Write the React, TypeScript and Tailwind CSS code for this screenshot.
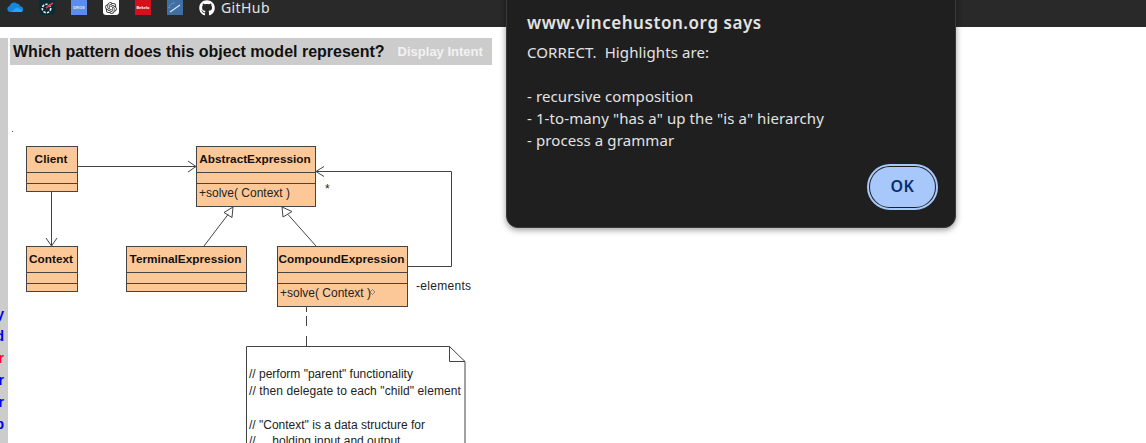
import { FaGithub } from "react-icons/fa";
import { RiOpenaiFill } from "react-icons/ri";

const sideLetters = [
  { ch: "y", red: false },
  { ch: "d", red: false },
  { ch: "r", red: true },
  { ch: "r", red: false },
  { ch: "r", red: false },
  { ch: "p", red: false },
];

function Bookmarks() {
  return (
    <div className="h-[27px] bg-[#292929] flex items-start pl-[7px] gap-4 overflow-hidden shrink-0">
      <svg width="16" height="15" viewBox="0 0 16 15">
        <path d="M3 12a3 3 0 0 1-.4-5.9A4.4 4.4 0 0 1 9.8 3.6a3.4 3.4 0 0 1 3.4 2.6A2.9 2.9 0 0 1 13 12z" fill="#1a86d8" />
        <path d="M4 12 9.8 7.4 16 10.4a2.9 2.9 0 0 1-3 1.6z" fill="#2aa7ee" />
      </svg>
      <div className="w-4 h-[15px] bg-[#0d2b33] rounded-b-sm flex items-center justify-center">
        <svg width="14" height="14" viewBox="0 0 14 14">
          <circle cx="6.5" cy="7.5" r="4.2" fill="none" stroke="#e8eef0" strokeWidth="1.6" strokeDasharray="2.4 1.2" />
          <path d="M6 7 13 2" stroke="#e5344a" strokeWidth="1.7" />
        </svg>
      </div>
      <div className="w-4 h-[15px] bg-[#5b8def] flex items-center justify-center">
        <span className="text-[4px] leading-none font-bold text-[#dfe9fb] font-['Liberation_Sans',sans-serif]">DRGS</span>
      </div>
      <div className="w-4 h-[15px] bg-white rounded-b-[3px] flex items-center justify-center">
        <RiOpenaiFill className="text-[#222] w-[14px] h-[14px]" />
      </div>
      <div className="w-4 h-[15px] bg-[#d5101c] flex items-center justify-center">
        <span className="text-[4px] leading-none font-bold text-white font-['Liberation_Sans',sans-serif]">Bekelo</span>
      </div>
      <div className="w-4 h-[15px] bg-[#3f6fa3] flex items-center justify-center">
        <svg width="14" height="13" viewBox="0 0 14 13">
          <path d="M2 11 12 4" stroke="#dbe7f2" strokeWidth="1.2" />
          <path d="M1 7a6 6 0 0 1 6-5" stroke="#9fc0de" strokeWidth="1" fill="none" strokeDasharray="1 1" />
        </svg>
      </div>
      <div className="flex items-center gap-[6px] h-[15px] text-[#e3e3e3]">
        <FaGithub className="w-4 h-4 text-white" />
        <span className="text-[14px] leading-none tracking-[0.4px] font-['Noto_Sans',sans-serif]">GitHub</span>
      </div>
    </div>
  );
}

function UmlBox({ x, y, w, h, title }: { x: number; y: number; w: number; h: number; title: string }) {
  return (
    <g>
      <rect x={x + 0.5} y={y + 0.5} width={w} height={h} fill="#fdc898" stroke="#444" />
      <path d={`M${x} ${y + 26.5}H${x + w}M${x} ${y + 37.5}H${x + w}`} stroke="#444" />
      <text x={x + w / 2 - 0.5} y={y + 16.5} textAnchor="middle" fontSize="11.8" fontWeight="700" fill="#111">
        {title}
      </text>
    </g>
  );
}

function Diagram() {
  return (
    <svg
      width="482"
      height="378"
      viewBox="10 65 482 378"
      className="block font-['Liberation_Sans',sans-serif]"
    >
      <rect x="12" y="131" width="1" height="1" fill="#555" />

      <UmlBox x={26} y={146} w={51} h={45} title="Client" />
      <UmlBox x={196} y={146} w={119} h={60} title="AbstractExpression" />
      <UmlBox x={26} y={246} w={51} h={45} title="Context" />
      <UmlBox x={126} y={246} w={120} h={45} title="TerminalExpression" />
      <UmlBox x={277} y={246} w={130} h={60} title="CompoundExpression" />

      <g fontSize="12" fill="#222">
        <text x="199" y="196.5">+solve( Context )</text>
        <text x="280" y="296.5">+solve( Context )</text>
        <text x="325" y="193">*</text>
        <text x="416" y="290" letterSpacing="0.3">-elements</text>
      </g>
      <path d="M372.5 289.5l2.5 2.5-2.5 2.5-2.5-2.5z" fill="none" stroke="#666" strokeWidth="0.7" />

      <g fill="none" stroke="#444">
        <path d="M77 166.5H195M188 161l8 5.5-8 5.5" />
        <path d="M51.5 191V245M46 238l5.5 8 5.5-8" />
        <path d="M407 266.5H451.5V171.5H316M324 166.5l-8 5 8 5" />
        <path d="M233 207l-9 5.5 8 5zM228 214.5L204 246" />
        <path d="M282 207l1 10 9-5.5zM288 214.5L316 246" />
        <path d="M306.5 306V312M306.5 316V326M306.5 336V346" />
        <path d="M246.5 443V346.5H449.5L465 361.5V443M449.5 346.5V361.5H465" />
      </g>

      <g fontSize="12" fill="#222">
        <text x="249" y="378">{'// perform "parent" functionality'}</text>
        <text x="249" y="395" letterSpacing="0.1">{'// then delegate to each "child" element'}</text>
        <text x="249" y="429">{'// "Context" is a data structure for'}</text>
        <text x="249" y="445" xmlSpace="preserve">{'//     holding input and output'}</text>
      </g>
    </svg>
  );
}

function AlertDialog() {
  return (
    <div className="absolute left-[506px] -top-[20px] w-[450px] h-[248px] bg-[#1f1f1f] rounded-xl border border-[#3a3a3a] shadow-[0_2px_6px_rgba(0,0,0,0.4)] pt-[30px] px-[20px] font-['Noto_Sans',sans-serif]">
      <h2 className="text-[17px] leading-[24px] font-semibold tracking-[0.55px] text-[#e3e3e3]">www.vincehuston.org says</h2>
      <div className="mt-[6px] text-[15px] leading-[22px] tracking-[0.1px] text-[#e3e3e3] whitespace-pre">
        {'CORRECT.  Highlights are:\n\n- recursive composition\n- 1-to-many "has a" up the "is a" hierarchy\n- process a grammar'}
      </div>
      <div className="flex justify-end mt-[14px]">
        <button className="w-[69px] h-[44px] pb-[2px] rounded-full bg-[#a8c7fa] border-2 border-[#1f1f1f] outline-2 outline-[#a8c7fa] -outline-offset-[1px] text-[#062e6f] text-[16px] font-semibold tracking-[0.5px] mr-[-2px]">
          OK
        </button>
      </div>
    </div>
  );
}

export default function App() {
  return (
    <div className="relative w-[1146px] h-[443px] overflow-hidden bg-white flex flex-col">
      <Bookmarks />
      <div className="flex flex-1 pt-[11px] min-h-0">
        <aside className="w-2 bg-[#cccccc] pt-[265px] flex flex-col items-end overflow-hidden font-['Liberation_Sans',sans-serif] font-bold text-[14px] leading-[22px]">
          {sideLetters.map((l, i) => (
            <div key={i} className={l.red ? "text-[#ff0033] mr-[4px]" : "text-[#0000ee] mr-[4px]"}>
              {l.ch}
            </div>
          ))}
        </aside>
        <main className="ml-[2px] w-[482px]">
          <div className="h-[27px] bg-[#cccccc] pl-[3px] flex items-center whitespace-nowrap font-['Liberation_Sans',sans-serif] font-bold">
            <span className="text-[16px] text-[#111]">Which pattern does this object model represent?</span>
            <span className="ml-[13px] text-[13px] text-[#f2f2f2]">Display Intent</span>
          </div>
          <Diagram />
        </main>
      </div>
      <AlertDialog />
    </div>
  );
}
